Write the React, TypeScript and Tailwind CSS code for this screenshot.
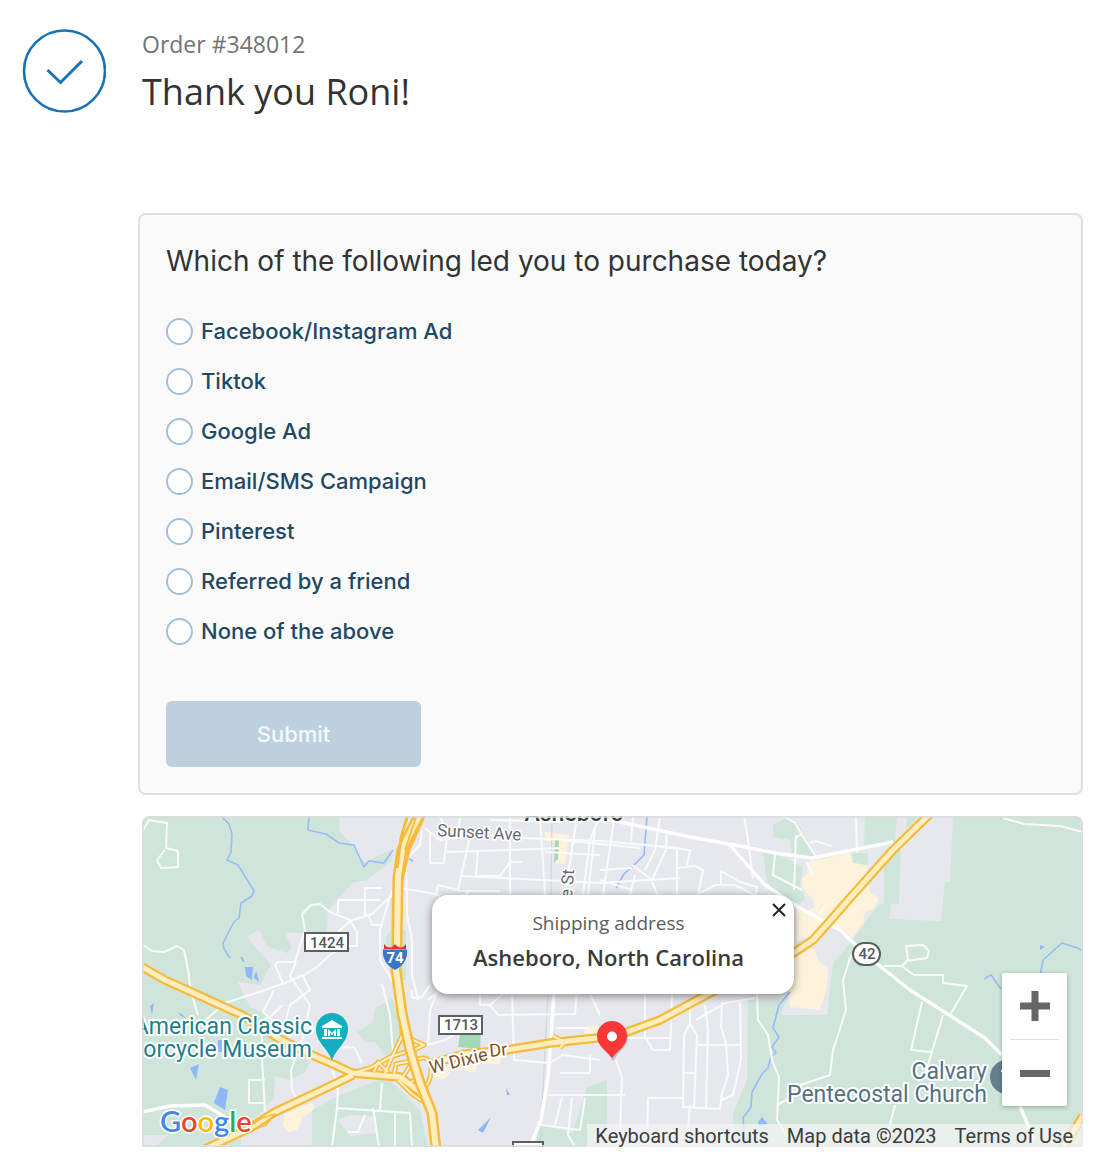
import { useState } from "react";

const OPTIONS = [
  { value: "social", label: "Facebook/Instagram Ad" },
  { value: "tiktok", label: "Tiktok" },
  { value: "google", label: "Google Ad" },
  { value: "email", label: "Email/SMS Campaign" },
  { value: "pinterest", label: "Pinterest" },
  { value: "friend", label: "Referred by a friend" },
  { value: "none", label: "None of the above" },
];

const PARKS = [
  "M142 816H339L340 832L352 845L362 860L375 867L368 880L352 883L338 900L328 910L327 932L303 933H285L292 948L287 953L268 947L259 930L247 937L271 965L260 985L238 982L250 1007L272 1017L262 1030L310 1062L305 1072L290 1080L275 1076L274 1098L262 1112L241 1128V1147H155L168 1135H142Z",
  "M370 860L390 850L393 860L380 870L366 880Z",
  "M390 890H397V948H387L385 938L391 930Z",
  "M401 930H406V980H400Z",
  "M375 1008L392 998L400 1018L402 1048L386 1056L370 1036Z",
  "M357 1032L376 1020V1042L366 1042Z",
  "M312 1110L340 1095L387 1077L400 1090L420 1110L428 1147H312Z",
  "M540 1123L572 1133L580 1110L587 1087L607 1080V1147H535Z",
  "M748 998L788 998L780 1015H827L833 963L850 943L877 907L884 903V858L901 838L899 904H891L889 919L941 921L945 882H950L953 816H1083V1147H733V1113L747 1080Z",
  "M763 853H775L803 867L800 884L805 900L797 906L786 900L767 883Z",
  "M773 825L787 817L800 827L817 858H792L790 840L773 837Z",
  "M865 816H897L895 842L864 847Z",
  "M908 816H920L905 830Z",
  "M852 853H868V865H853Z",
];

const SHOPS = [
  "M807 862L850 853L853 863L867 865L870 893L878 898L875 908L865 912L863 922L853 937L832 925L817 939L797 943V908L815 903L803 888L802 878L808 873Z",
  "M795 957L813 948L820 963L828 968L827 987L820 1010L790 1007L788 990Z",
  "M285 1113L312 1103L315 1108L303 1118L297 1130L288 1132L283 1125Z",
  "M545 832L569 835L565 864L555 863L556 842L545 841Z",
  "M433 1070L437 1081L446 1078L452 1069L475 1072L478 1063L500 1064L503 1052Z",
  "M585 1028L598 1025V1040H583Z",
];

const RIVERS = [
  "M221 816L229 824L232 834L231 852L227 860L238 865L254 891L252 896L241 903L239 918L234 922L223 943L224 949L230 958",
  "M309 816L308 830L326 834L339 843L354 845L364 867L369 861L384 863L393 850",
  "M241 957L244 962M256 972L258 981",
  "M409 859L413 861",
  "M647 816L644 855L632 867L624 874L616 888",
  "M790 992L779 1005L773 1028L779 1037L772 1047L776 1053L771 1057L768 1068L762 1074L752 1092L751 1107L743 1118L744 1132V1147",
  "M984 979L991 975L1001 989M1040 976L1043 960L1062 943L1078 948L1083 952",
];

const STREETS = [
  // west side
  "M142 832L149 820L167 823L166 848L178 851V867L161 868L157 860L165 850",
  "M142 944L152 951L164 952L177 946L184 950L188 970L191 992L198 1015",
  "M200 1025L225 1003L262 991L285 983L303 975",
  "M320 965L303 976L310 990L290 1005L283 1030L263 1012L274 990M283 1005L270 1017L262 1020V1058L265 1112M265 1080H249V1103H265",
  "M283 983L275 965L277 962H295L305 930L302 914L311 905L320 904L330 912L350 920L357 932V946L345 946L330 955L318 966",
  "M296 962L290 976L310 1005L302 1040L291 1070L292 1090L298 1102",
  "M338 932L350 921L372 914L392 895L400 888L430 893L440 896",
  "M338 913V900H375M365 915V888H382M368 914L372 925H382M380 900H362",
  "M330 1048L354 1047L362 1063M332 1070L338 1085L337 1108L332 1147",
  "M336 1108L410 1113L412 1147M373 1108L379 1147M395 1112V1147M348 1132H358L365 1115M382 1083L380 1110",
  "M392 890L380 930V960L395 985M382 984L390 1015L393 1052",
  "M406 860L407 915L412 940L412 975L418 1000",
  // downtown grid
  "M425 828L440 840L480 835L520 838L600 841L680 848",
  "M422 830L420 845L405 860M430 832V863H444L447 837",
  "M447 852L510 850L560 848M478 850L476 876H500L510 862H522",
  "M440 816L445 828M460 816L458 835M510 816V895M540 816L545 895M490 820L560 822M577 816L565 895",
  "M461 876L600 883L680 878M438 885L458 890L470 836M438 885L436 895M458 891H500M470 890L461 900M545 852L600 855M560 840L640 848M600 816L590 840L583 895",
  "M595 830L588 895M614 820L603 895M633 816L631 841M660 816L655 850L645 870M667 830L666 850L652 880L632 865M600 870L632 868M600 880L632 890M630 895L635 875M652 882L660 900",
  "M677 850V895M677 868L695 866L703 870L698 895M660 847L690 850L687 865M700 893L715 885H735L760 898M721 885V871L740 882L757 887L755 900",
  "M744 816L748 840L753 878",
  "M775 855L773 875L802 890M796 835L794 890M783 816L795 823L802 835L817 858M802 833L796 838M810 843L816 841L832 846",
  "M806 862L814 875M825 905L818 917",
  // south of the popup
  "M438 990L430 1010L428 1045L445 1040L470 1025M412 990V998L422 997L430 985M440 990L428 1000M480 990V1005H490L498 1015L575 1014L577 990M490 1005L505 992M512 990L514 1060L550 1063L562 1055L600 1060M556 1028H590",
  "M588 990L600 1015M590 1055V1073H560M548 1095H625M562 1097L555 1125M572 1097L568 1135L575 1147M585 1098L580 1130M541 1125L580 1130M505 994H580",
  "M616 1060L622 1078L620 1130M645 994V1037L653 1050H670L672 994M626 1038H672M647 1147L648 1098H684",
  "M690 1024L684 1035L683 1107L720 1109L722 1094L728 1075L726 1043L721 1027L722 1002M690 1000V1024L697 1035L694 1108M705 1005L708 1030L706 1108M697 1045H740M740 1000L741 1060L733 1095L722 1100M684 1073H695M690 1105L688 1128M696 1020L725 1003L755 998",
  // east side
  "M757 994L758 1020L768 1035L772 1060L779 1077L777 1120L790 1140",
  "M777 1105L792 1097L800 1085L830 1075L833 1050L846 1010L843 980L851 955",
  "M884 966H902L908 960L906 946L923 945L929 951L927 958L907 961M903 967L914 975H943V983L967 986L950 1015M922 1002L911 1050L931 1052M943 1015L925 1075M895 1105L888 1132V1147",
  "M1003 818L1024 824L1060 826L1083 832",
  "M856 816L857 853",
];

const MAIN_STREETS = [
  "M570 816L615 821L690 837L729 844L765 885L800 908L840 930L866 955L910 990L985 1038L1002 1055",
  "M729 844L775 853L812 858L893 842",
  "M554 994L548 1078L541 1120L530 1147",
  "M142 1112L170 1106L205 1105L225 1117",
  "M1020 1106L1034 1140",
];

const HIGHWAYS = [
  "M142 967L165 980L242 1015L278 1038L312 1055L335 1065L352 1073L400 1077L420 1092",
  "M353 1075L322 1090L275 1112L250 1128L205 1149",
  "M430 1064L465 1054L507 1050L550 1043L597 1038L627 1032L660 1020L710 993L760 970L795 952L813 940L830 921L850 898L893 850L930 814",
  "M1083 1116L1062 1149",
];

const RAMPS = [
  "M353 1073L370 1068L390 1057L409 1051",
  "M402 1013L402 1036L392 1057L384 1075M405 1034L413 1040L424 1045L414 1050",
  "M416 1060C424 1056 432 1058 431 1070C431 1082 424 1090 419 1094",
  "M374 1072L378 1062L388 1072M394 1075L396 1064L412 1061M402 1078L410 1066L417 1070M398 1080L412 1094L424 1102M406 1085L418 1078",
  "M553 1036L565 1042L560 1048M545 1042H562",
];

const INTERSTATE =
  "M420 814L412 829L402 850L398 877L397 943L396 970L402 1013L410 1050L420 1083L432 1113L436 1149";

function Paths({ items }: { items: string[] }) {
  return (
    <>
      {items.map((d) => (
        <path key={d} d={d} />
      ))}
    </>
  );
}

function MapCanvas() {
  return (
    <svg
      viewBox="142 816 941 331"
      preserveAspectRatio="xMidYMid slice"
      className="block h-full w-full"
      role="img"
      aria-label="Map of Asheboro"
    >
      <rect x="142" y="816" width="941" height="331" fill="#e7e8ed" />
      <g fill="#d0e5d9">
        <Paths items={PARKS} />
      </g>
      <g fill="#fdf3da">
        <Paths items={SHOPS} />
      </g>
      <g fill="#e7e8ed">
        <path d="M338 1120L350 1115L376 1117V1133L350 1136Z" />
        <path d="M797 943L803 936L808 940L797 948ZM800 903L812 897L815 907L806 912Z" />
      </g>
      <g fill="#a4d9b5">
        <path d="M460 1034L481 1030L480 1049L458 1047Z" />
        <path d="M555 840H559L558 859L554 863Z" />
      </g>
      <g fill="#90b7fa">
        <path d="M245 967H253L252 980L246 976ZM255 972L259 982L254 978Z" />
        <path d="M150 1006L154 1003L152 1015ZM190 1068L199 1064L196 1080ZM220 1087L228 1090L225 1110L214 1103Z" />
        <path d="M178 1012L183 1015L186 1018L181 1016ZM218 1040H222V1052H218Z" />
        <path d="M478 1130L491 1117L483 1133ZM506 1088L510 1095H507ZM758 1122L762 1117L768 1124L759 1126ZM1040 945L1045 947L1040 950Z" />
      </g>
      <g fill="none" strokeLinejoin="round">
        <g stroke="#98bbf7" strokeWidth="1.6">
          <Paths items={RIVERS} />
        </g>
        <path d="M552 816L551 895M548 994L540 1147" stroke="#d3d5d9" strokeWidth="1.2" />
        <g stroke="#f9fbfb" strokeWidth="2">
          <Paths items={STREETS} />
        </g>
        <g stroke="#ffffff" strokeWidth="3.4">
          <Paths items={MAIN_STREETS} />
        </g>
        <g stroke="#f6ba3c" strokeWidth="5">
          <Paths items={RAMPS} />
        </g>
        <g stroke="#f6ba3c" strokeWidth="9.4">
          <Paths items={HIGHWAYS} />
        </g>
        <g stroke="#feeebd" strokeWidth="2">
          <Paths items={RAMPS} />
        </g>
        <g stroke="#feeebd" strokeWidth="5">
          <Paths items={HIGHWAYS} />
        </g>
        <path d="M250 1126L262 1118L275 1114L266 1125L252 1130" stroke="#f6ba3c" strokeWidth="1.6" />
        <path d={INTERSTATE} stroke="#f6ba3c" strokeWidth="11" />
        <path d={INTERSTATE} stroke="#feeebd" strokeWidth="6" />
        <path d="M408 814L401 838L397 868M425 814L409 850L402 880" stroke="#f6ba3c" strokeWidth="3" />
        <path d="M417 814L405 850" stroke="#f6ba3c" strokeWidth="2" />
      </g>

      {/* road shields */}
      <g fontFamily="Roboto, sans-serif" fontSize="15" fontWeight="500" textAnchor="middle">
        <g fill="#fff" stroke="#5c6062" strokeWidth="2">
          <rect x="305" y="933" width="43" height="18" />
          <rect x="439" y="1016" width="43" height="18" />
          <rect x="513" y="1142" width="30" height="18" />
          <rect x="853" y="943" width="27" height="22" rx="11" />
        </g>
        <g fill="#54585a">
          <text x="327" y="948">1424</text>
          <text x="461" y="1030">1713</text>
          <text x="867" y="959">42</text>
        </g>
        <path d="M384 944L387 947C391 948 393 947 395 944C397 947 400 948 403 947L406 944V949H384Z" fill="#d2393c" />
        <path d="M383 949.5H407C408 959 403 966 395 970C387 966 382 959 383 949.5Z" fill="#3a76c7" />
        <text x="395" y="963" fill="#fff" fontWeight="700">74</text>
      </g>

      {/* place and street names */}
      <g fontFamily="Roboto, sans-serif" paintOrder="stroke" stroke="#fff" strokeLinejoin="round">
        <g fontSize="23" strokeWidth="4">
          <g fill="#1c7f8c" textAnchor="end">
            <text x="312" y="1034">American Classic</text>
            <text x="312" y="1057">orcycle Museum</text>
          </g>
          <g fill="#54717f" textAnchor="end">
            <text x="987" y="1079">Calvary</text>
            <text x="987" y="1102">Pentecostal Church</text>
          </g>
        </g>
        <g fontSize="17" strokeWidth="3" fill="#66696c">
          <text transform="translate(437 836) rotate(3)">Sunset Ave</text>
          <text transform="translate(573 884) rotate(-85)" textAnchor="middle">e St</text>
        </g>
        <g fontSize="18" strokeWidth="4" fill="#7c5230">
          <text transform="translate(431 1074) rotate(-14)">W Dixie</text>
          <text transform="translate(490 1057) rotate(-6)">Dr</text>
        </g>
        <text x="574" y="821" textAnchor="middle" fontSize="23" fontWeight="500" strokeWidth="3" fill="#3b3e40">Asheboro</text>
      </g>

      {/* museum pin */}
      <path d="M332 1061C329 1049 316 1043 316 1029A16 16 0 0 1 348 1029C348 1043 335 1049 332 1061Z" fill="#12aec2" />
      <path d="M332 1020L342 1026V1028H322V1026ZM324 1029H327V1036H324ZM337 1029H340V1036H337ZM322 1037H342V1039H322ZM328 1036V1029L332 1033L336 1029V1036H334V1033L332 1035L330 1033V1036Z" fill="#fff" />

      {/* church pin */}
      <circle cx="1007" cy="1077" r="17" fill="#647f8e" />
      <path d="M1001 1070H1004V1072H1001Z" fill="#fff" />

      {/* delivery pin */}
      <path d="M612 1060C607 1051 597 1046 597 1036A15 15 0 0 1 627 1036C627 1046 617 1051 612 1060Z" fill="#000" opacity=".18" transform="translate(1 1)" />
      <path d="M612 1058C607 1051 597 1046 597 1036A15 15 0 0 1 627 1036C627 1046 617 1051 612 1058Z" fill="#fb3737" />
      <circle cx="612" cy="1036.5" r="5" fill="#fff" />

      <text x="160" y="1132" fontFamily="Lato, sans-serif" fontSize="29" fontWeight="600" paintOrder="stroke" stroke="#fff" strokeWidth="3">
        <tspan fill="#4285f4">G</tspan>
        <tspan fill="#ea4335">o</tspan>
        <tspan fill="#fbbc05">o</tspan>
        <tspan fill="#4285f4">g</tspan>
        <tspan fill="#34a853">l</tspan>
        <tspan fill="#ea4335">e</tspan>
      </text>
    </svg>
  );
}

function OrderHeader() {
  return (
    <header className="flex items-start gap-9">
      <svg width="84" height="84" viewBox="0 0 84 84" fill="none" stroke="#1773b5" aria-hidden="true">
        <circle cx="42.5" cy="42" r="40.5" strokeWidth="2.6" />
        <path d="M25.5 41L38.5 53.5L60 32" strokeWidth="3" />
      </svg>
      <div className="font-['Open_Sans',sans-serif]">
        <p className="text-[23px] leading-[30px] text-[#737373]">Order #348012</p>
        <h1 className="text-[36px] leading-[66px] text-[#333]">Thank you Roni!</h1>
      </div>
    </header>
  );
}

function Survey() {
  const [choice, setChoice] = useState("");

  return (
    <form
      onSubmit={(e) => e.preventDefault()}
      className="rounded-lg border-2 border-[#e0e0e0] bg-[#fafafa] p-[26px] font-[Inter,sans-serif]"
    >
      <fieldset>
        <legend className="text-[28px] leading-10 text-[#333]">
          Which of the following led you to purchase today?
        </legend>
        <div className="mt-[25px]">
          {OPTIONS.map((option) => (
            <label
              key={option.value}
              className="flex h-[50px] items-center gap-2 text-[22px] font-medium text-[#1f4864]"
            >
              <input
                type="radio"
                name="source"
                value={option.value}
                checked={choice === option.value}
                onChange={() => setChoice(option.value)}
                className="size-[27px] appearance-none rounded-full border-2 border-[#a3c0da] bg-white checked:border-[8px] checked:border-[#1773b5]"
              />
              {option.label}
            </label>
          ))}
        </div>
      </fieldset>
      <button
        type="submit"
        disabled={!choice}
        className="mt-[45px] h-[66px] w-[255px] rounded-md bg-[#1773b5] text-[22px] font-medium text-white disabled:bg-[#bdd0e0] disabled:text-[#f5f8fb]"
      >
        Submit
      </button>
    </form>
  );
}

function ShippingMap() {
  const [open, setOpen] = useState(true);

  return (
    <section
      aria-label="Shipping address map"
      className="relative mt-[21px] ml-1 aspect-[941/331] overflow-hidden rounded-t-lg"
    >
      <MapCanvas />
      <div className="pointer-events-none absolute inset-0 rounded-t-lg border-2 border-[#d9dcdc]/80" />

      {open && (
        <div className="absolute top-[79px] left-1/2 h-[99px] w-[362px] -translate-x-1/2 rounded-2xl bg-white pt-3 pr-2 text-center font-['Open_Sans',sans-serif] shadow-[0_2px_8px_rgba(0,0,0,0.45)]">
          <p className="text-[19px] leading-8 text-[#5c5c5c]">Shipping address</p>
          <p className="text-[22px] leading-9 font-semibold text-[#3a3a3a]">Asheboro, North Carolina</p>
          <button
            type="button"
            aria-label="Close"
            onClick={() => setOpen(false)}
            className="absolute top-2 right-2 text-[#222]"
          >
            <svg width="14" height="14" viewBox="0 0 14 14" stroke="currentColor" strokeWidth="2" aria-hidden="true">
              <path d="M1 1L13 13M13 1L1 13" />
            </svg>
          </button>
        </div>
      )}

      <div className="absolute right-4 bottom-[41px] flex w-[65px] flex-col rounded-xs bg-white shadow-[0_1px_4px_rgba(0,0,0,0.3)]">
        <button type="button" aria-label="Zoom in" className="flex h-[66px] items-center justify-center">
          <svg width="30" height="30" viewBox="0 0 30 30" fill="#666" aria-hidden="true">
            <path d="M11.5 0H18.5V11.5H30V18.5H18.5V30H11.5V18.5H0V11.5H11.5Z" />
          </svg>
        </button>
        <div className="mx-2 h-px bg-[#e0e0e0]" />
        <button type="button" aria-label="Zoom out" className="flex h-[66px] items-center justify-center">
          <svg width="30" height="7" viewBox="0 0 30 7" fill="#666" aria-hidden="true">
            <path d="M0 0H30V7H0Z" />
          </svg>
        </button>
      </div>

      <div className="absolute right-0 bottom-0 flex h-[23px] items-center gap-[18px] bg-[#f5f5f5]/70 pr-2.5 pl-2 font-[Roboto,sans-serif] text-[20px] text-[#3c3c3c]">
        <button type="button">Keyboard shortcuts</button>
        <span>Map data ©2023</span>
        <a href="#terms">Terms of Use</a>
      </div>
    </section>
  );
}

export default function App() {
  return (
    <div className="min-h-screen bg-white pt-[29px] pr-[14px] pb-4 pl-[22px]">
      <OrderHeader />
      <main className="mt-[88px] ml-[116px]">
        <Survey />
        <ShippingMap />
      </main>
    </div>
  );
}
